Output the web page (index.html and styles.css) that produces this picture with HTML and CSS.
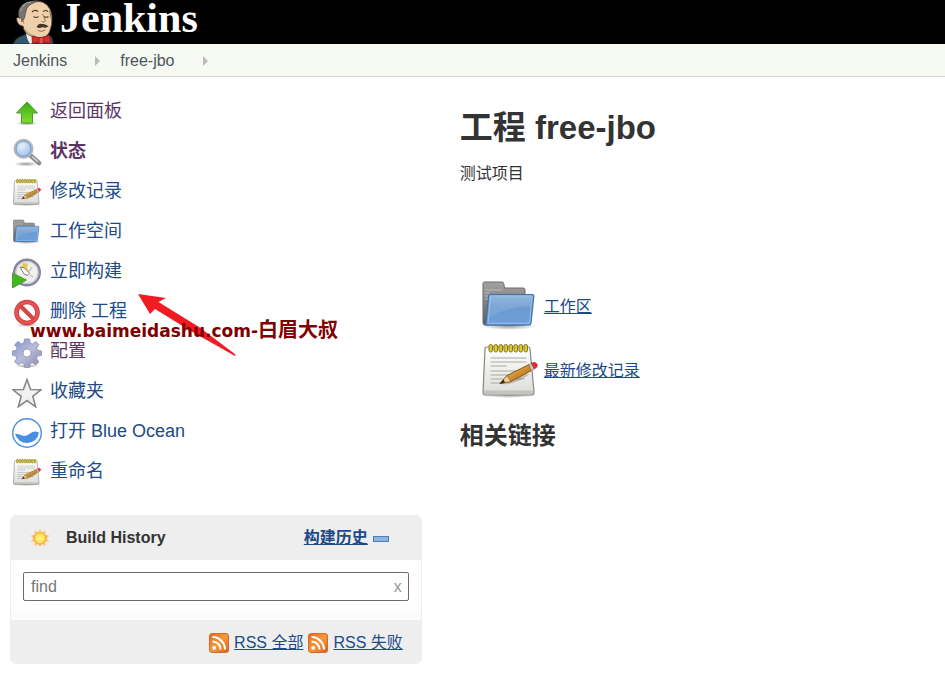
FILE: index.html
```html
<!DOCTYPE html>
<html lang="zh-CN">
<head>
<meta charset="utf-8">
<title>free-jbo [Jenkins]</title>
<link rel="stylesheet" href="styles.css">
</head>
<body>
<svg class="defs" aria-hidden="true">
  <defs>
    <linearGradient id="gGreen" x1="0" y1="0" x2="0" y2="1"><stop offset="0" stop-color="#3fa81a"/><stop offset="1" stop-color="#7ee02c"/></linearGradient>
    <linearGradient id="gPaper" x1="0" y1="0" x2="0" y2="1"><stop offset="0" stop-color="#ffffff"/><stop offset="1" stop-color="#dcdcd8"/></linearGradient>
    <linearGradient id="gFolder" x1="0" y1="0" x2="0" y2="1"><stop offset="0" stop-color="#86b0dc"/><stop offset="0.45" stop-color="#6c9bd0"/><stop offset="1" stop-color="#6ba0dc"/></linearGradient>
    <linearGradient id="gBack" x1="0" y1="0" x2="0" y2="1"><stop offset="0" stop-color="#a2a2a2"/><stop offset="1" stop-color="#5c5c5c"/></linearGradient>
    <linearGradient id="gPencil" x1="0" y1="0" x2="1" y2="1"><stop offset="0.2" stop-color="#f0b860"/><stop offset="0.8" stop-color="#b06c14"/></linearGradient>
    <linearGradient id="gGear" x1="0" y1="0" x2="1" y2="1"><stop offset="0" stop-color="#7f93c4"/><stop offset="0.5" stop-color="#b8bcda"/><stop offset="1" stop-color="#8a86a8"/></linearGradient>
    <linearGradient id="gRss" x1="0" y1="0" x2="1" y2="1"><stop offset="0" stop-color="#e06a24"/><stop offset="0.5" stop-color="#f79a3c"/><stop offset="1" stop-color="#d95f20"/></linearGradient>
    <radialGradient id="gLens" cx="0.4" cy="0.35" r="0.7"><stop offset="0" stop-color="#e4f0fc"/><stop offset="1" stop-color="#96bce8"/></radialGradient>
    <radialGradient id="gSun"><stop offset="0" stop-color="#fff6a0"/><stop offset="1" stop-color="#fcd83c"/></radialGradient>
    <radialGradient id="gShade"><stop offset="0" stop-color="#000" stop-opacity="0.4"/><stop offset="1" stop-color="#000" stop-opacity="0"/></radialGradient>
    <symbol id="folder" viewBox="0 0 56 56">
      <ellipse cx="27" cy="46" rx="28" ry="4" fill="url(#gShade)"/>
      <path d="M1 3.500Q1 2 2.500 2H20q1.500 0 1.700 1.500L22.500 8H41q2 0 2 2v35H3q-2 0-2-2Z" fill="url(#gBack)" stroke="#6a6a6a"/>
      <path d="M2.500 10h18M2.500 13h5M2.500 16h4M2.500 19h4" stroke="#c4c4c4" stroke-width="0.800"/>
      <path d="M8.500 14.500H50q2 0 1.800 2L49 43q-.3 2-2 2H4q-1 0 0-1.500L6.500 16.500q.2-2 2-2Z" fill="url(#gFolder)" stroke="#3f6fae" stroke-width="1.200"/>
      <path d="M8.500 16.200H50L47.500 43.300H6Z" fill="none" stroke="#a4c4e8" stroke-width="0.900"/>
      <path d="M8 17H49l-.8 9Q29 26 7 37Z" fill="#fff" opacity="0.100"/>
    </symbol>
    <symbol id="notepad" viewBox="0 0 56 56">
      <ellipse cx="27" cy="51" rx="27" ry="3" fill="url(#gShade)"/>
      <path d="M5 3H47Q48 3 48 5L52 48q0 3-2 3H3q-2 0-2-3L3 5Q3 3 5 3Z" fill="url(#gPaper)" stroke="#858582" stroke-width="1.200"/>
      <path d="M1.500 46.500h50v4h-50Z" fill="#b8b8b4" opacity="0.700"/>
      <path d="M8.500 14h36M8.500 18h36M8.500 22h16M8.500 27h36M8.500 31h32M8.500 35h34M8.500 39h12" stroke="#aaa" stroke-width="1.100"/>
      <g fill="#dccb38" stroke="#85751a" stroke-width="1"><rect x="7" y="0.500" width="3.500" height="7.500" rx="1.700"/><rect x="12" y="0.500" width="3.500" height="7.500" rx="1.700"/><rect x="17" y="0.500" width="3.500" height="7.500" rx="1.700"/><rect x="22" y="0.500" width="3.500" height="7.500" rx="1.700"/><rect x="27" y="0.500" width="3.500" height="7.500" rx="1.700"/><rect x="32" y="0.500" width="3.500" height="7.500" rx="1.700"/><rect x="37" y="0.500" width="3.500" height="7.500" rx="1.700"/><rect x="42" y="0.500" width="3.500" height="7.500" rx="1.700"/></g>
      <path d="M18 40q14 2 30-10l-6 0Z" fill="#000" opacity="0.180"/>
      <path d="M18 39.500L25 31.500 47 20.500 49.500 26.500 29 37.500Z" fill="url(#gPencil)" stroke="#8f5902"/>
      <path d="M18 39.500L25 31.500 29 37.500Z" fill="#e9cfa0" stroke="#8f5902" stroke-width="0.700"/>
      <path d="M17.500 40l4-4.500 1.500 2.800Z" fill="#222"/>
      <path d="M47 20.500l2.500-1.300 2.800 5.800-2.800 1.500Z" fill="#ccc" stroke="#888" stroke-width="0.600"/>
      <path d="M49.500 19.200q4-1.700 5.500 1t-2.700 4.800Z" fill="#e82c30" stroke="#b82024" stroke-width="0.700"/>
    </symbol>
    <symbol id="rss" viewBox="0 0 20 20">
      <rect x="0.500" y="0.500" width="19" height="19" rx="2.500" fill="url(#gRss)" stroke="#d96a28"/>
      <circle cx="5.200" cy="14.800" r="1.900" fill="#fff"/>
      <path d="M3.500 8.500a8 8 0 0 1 8 8M3.500 4a12.500 12.500 0 0 1 12.500 12.500" fill="none" stroke="#fff" stroke-width="2.100"/>
    </symbol>
  </defs>
</svg>

<header class="top">
  <a class="brand" href="#">
    <svg class="butler" viewBox="0 0 44 44" aria-hidden="true">
      <path d="M1.500 44Q3 38 10 36l9-4 18 3q4 2 4 9Z" fill="#33576c" stroke="#1c2f3c"/>
      <path d="M14 31l20 3 1 7-9-1-8 4Q14 38 14 31Z" fill="#f0ece6"/>
      <path d="M8 18Q3.500 16 5 21t6 5l1 4q4 7 14 7.500 9 .5 11.500-5.500 3-7 2.500-16Q38 2 25 1 9 1 8 18Z" fill="#eed0aa" stroke="#54402f" stroke-width="0.800"/>
      <path d="M7 18Q4 6 16 2q5-2 12-1Q17 3 14.500 9q-1 4-2 9l-2.500 4-1-4Z" fill="#77736f" stroke="#3c3835" stroke-width="0.600"/>
      <path d="M37 9q3 5 3 12l-1.500-3Z" fill="#77736f"/>
      <path d="M10 6q4-4 9-4M8.500 11q1-4 4-6" fill="none" stroke="#b4b0aa" stroke-width="0.900"/>
      <path d="M20 12q3-3 6-.5M31 11.500q3-2 5 0M21.500 16.500q2.500 2 5 0M32 16.500q2 1.500 4.500 0" fill="none" stroke="#4e3b2c" stroke-width="1.100"/>
      <path d="M30.500 14q2 4 3 7-1.500 2-4 .5" fill="none" stroke="#9d7557"/>
      <path d="M24.500 27q2-4 5.500-3 4-.5 6.500 2.500-3 2-6 .5-3 2-6 0Z" fill="#43352c"/>
      <path d="M26 30.500q4 2 7-.5" fill="none" stroke="#a0624c"/>
      <path d="M12 24l-1-4M13 29q3 5 8 6.500" fill="none" stroke="#b98e68"/>
      <path d="M20 37q0-1.500 2-1l6 2.500 7-2.500q3-1 3 1l.5 6.500-9-1.500-9 1.500Z" fill="#d92c2c" stroke="#7c1414" stroke-width="0.700"/>
      <path d="M27 37.500h4.500V43.500H27Z" fill="#f04848" stroke="#7c1414" stroke-width="0.600"/>
    </svg>
    <span class="brand-name">Jenkins</span>
  </a>
</header>

<nav class="crumbs" aria-label="Breadcrumb">
  <a href="#">Jenkins</a><span class="chevron"></span><a href="#">free-jbo</a><span class="chevron"></span>
</nav>

<div class="page">
  <aside class="side">
    <nav class="tasks">
      <a class="task visited" href="#"><svg viewBox="0 0 30 30"><ellipse cx="15" cy="25.500" rx="11" ry="2" fill="url(#gShade)"/><path d="M15 4L25.500 15H20.500V25H9.500V15H4.500Z" fill="url(#gGreen)" stroke="#4a9a2c"/></svg><span>返回面板</span></a>
      <a class="task visited current" href="#"><svg viewBox="0 0 30 30"><ellipse cx="14" cy="26" rx="12" ry="2.500" fill="url(#gShade)"/><path d="M18.500 17.500L27 25" stroke="#8c8c8c" stroke-width="4.500" stroke-linecap="round"/><path d="M20 18.500l6 5.200" stroke="#d8d8d8" stroke-width="1.500"/><circle cx="11.500" cy="10.800" r="9" fill="url(#gLens)" stroke="#b4b6b8" stroke-width="2"/><circle cx="11.500" cy="10.800" r="7.500" fill="none" stroke="#6c98d0"/></svg><span>状态</span></a>
      <a class="task" href="#"><svg viewBox="-2 -2 60 60"><use href="#notepad" width="56" height="56"/></svg><span>修改记录</span></a>
      <a class="task" href="#"><svg viewBox="-2 -2 60 60"><use href="#folder" width="56" height="56"/></svg><span>工作空间</span></a>
      <a class="task" href="#"><svg viewBox="0 0 30 30"><circle cx="15" cy="14.500" r="12.800" fill="#f0f0ec" stroke="#8486a2" stroke-width="2.400"/><circle cx="15" cy="14.500" r="11" fill="none" stroke="#c4c6ce"/><path d="M11 5l5 .5-1 5 2.500 3-4.500 3-4-7Z" fill="#ecc64c"/><path d="M8 9l4 7 3.500 1.500 2-2.500-5-5Z" fill="#fff" stroke="#666" stroke-width="0.800"/><path d="M20 9l-2.500 4M21 19l-3-2" stroke="#aaa"/><path d="M.5 15L14.500 22 .5 30Z" fill="#3fb818" stroke="#5a9a48"/></svg><span>立即构建</span></a>
      <a class="task" href="#"><svg viewBox="0 0 30 30"><ellipse cx="15" cy="27" rx="11" ry="2" fill="url(#gShade)"/><circle cx="15" cy="14.500" r="10.500" fill="#fff" stroke="#c43434" stroke-width="4.600"/><circle cx="15" cy="14.500" r="10.500" fill="none" stroke="#e65252" stroke-width="3.200"/><path d="M8 7.500l14 14" stroke="#d84444" stroke-width="4"/></svg><span>删除 工程</span></a>
      <a class="task visited" href="#"><svg viewBox="0 0 30 30"><ellipse cx="15" cy="28" rx="12" ry="2" fill="url(#gShade)"/><path fill-rule="evenodd" d="M12.500 1h5l.8 4 2.200.9L24 3.400 27 6.700 24.600 10l1 2.300 3.900.7v4.300l-4 .8-1 2.300 2.400 3.400-3.200 3.200-3.400-2.300-2.100.9-.8 3.900h-4.600l-.9-3.900-2.200-.9-3.400 2.300L2.500 23.700l2.300-3.400-.9-2.200-3.400-.8V13l3.600-.7 1-2.300L2.600 6.700 6 3.400l3.500 2.500 2.200-.9ZM15 11a4 4 0 1 0 .1 0Z" fill="url(#gGear)" stroke="#8286ac" stroke-width="0.700"/></svg><span>配置</span></a>
      <a class="task" href="#"><svg viewBox="0 0 30 30"><path d="M15 1.500L18.600 11.500 29 11.800 20.800 18.300 23.700 28.800 15 22.600 6.300 28.800 9.200 18.300 1 11.800 11.400 11.500Z" fill="#f1f1f1" stroke="#888885" stroke-width="1.600"/></svg><span>收藏夹</span></a>
      <a class="task" href="#"><svg viewBox="0 0 30 30"><circle cx="15" cy="15" r="14.300" fill="#fff" stroke="#4a90e2" stroke-width="1.400"/><path d="M3 15.500Q7 16 10 17.500 14 19 18 15.500 22 12 27 14.500A12.200 12.200 0 0 1 3 15.500Z" fill="#4a90e2"/></svg><span>打开 Blue Ocean</span></a>
      <a class="task" href="#"><svg viewBox="-2 -2 60 60"><use href="#notepad" width="56" height="56"/></svg><span>重命名</span></a>
    </nav>

    <section class="history">
      <div class="history-head">
        <svg class="sun" viewBox="0 0 20 20" aria-hidden="true"><path d="M10 .8l1.800 3.700 3.700-1.900-.4 4.100 4.100.9-2.700 2.800 2.700 2.800-4.100.8.400 3.900-3.700-1.800L10 19.200l-1.800-3.100-3.700 1.800.4-3.900-4.100-.8 2.700-2.800L.8 7.600l4.100-.9-.4-4.100 3.700 1.900Z" fill="#f9c070"/><circle cx="10" cy="10.300" r="5.800" fill="url(#gSun)" stroke="#f5a83c"/></svg>
        <strong>Build History</strong>
        <a class="trend" href="#">构建历史</a>
        <a class="collapse" href="#" aria-label="collapse"></a>
      </div>
      <div class="history-find">
        <div class="find-box">
          <input type="text" placeholder="find" aria-label="find">
          <button type="button">x</button>
        </div>
      </div>
      <div class="history-feeds">
        <a href="#"><svg viewBox="0 0 20 20"><use href="#rss"/></svg><span>RSS 全部</span></a>
        <a href="#"><svg viewBox="0 0 20 20"><use href="#rss"/></svg><span>RSS 失败</span></a>
      </div>
    </section>

    <svg class="arrow" viewBox="0 0 100 64" aria-hidden="true"><path d="M1 1L29 5 21.500 9 62 34 98.500 61.500 98 63 52 37 18 16 13 21Z" fill="#f01c24"/></svg>
    <div class="watermark">www.baimeidashu.com-<span>白眉大叔</span></div>
  </aside>

  <main class="main">
    <h1>工程 free-jbo</h1>
    <p class="about">测试项目</p>
    <ul class="shortcuts">
      <li><svg viewBox="0 0 56 56"><use href="#folder"/></svg><a href="#">工作区</a></li>
      <li><svg viewBox="0 0 56 56"><use href="#notepad"/></svg><a href="#">最新修改记录</a></li>
    </ul>
    <h2>相关链接</h2>
  </main>
</div>
</body>
</html>
```

FILE: styles.css
```css
* { box-sizing: border-box; }

body {
  margin: 0;
  background: #fff;
  color: #333;
  font: 16px/20px "Liberation Sans", "Noto Sans CJK SC", sans-serif;
}

a { color: #204a87; }
.defs { position: absolute; width: 0; height: 0; }

.top { background: #000; padding-left: 12px; }
.brand {
  display: flex;
  height: 44px;
  color: #fff;
  text-decoration: none;
}
.butler { width: 44px; height: 44px; margin-right: 4px; }
.brand-name { font: bold 42px/36px "Liberation Serif", serif; }

.crumbs {
  display: flex;
  align-items: center;
  height: 33px;
  padding: 2px 0 0 13px;
  background: #f6faf2;
  border-bottom: 1px solid #d3d7cf;
}
.crumbs a { color: #4d545d; text-decoration: none; }
.chevron {
  margin: 0 20px 0 28px;
  border: 5px solid transparent;
  border-left: 5px solid #bbb;
  border-right: 0;
}

.page {
  display: grid;
  grid-template-columns: 13fr 15fr;
  column-gap: 38px;
  padding: 16px 10px 12px;
}

.side { position: relative; }
.task {
  display: flex;
  align-items: center;
  gap: 8px;
  height: 40px;
  padding-left: 2px;
  font-size: 18px;
  text-decoration: none;
}
.task svg { flex: none; width: 30px; height: 30px; }
.task span { padding-bottom: 4px; }
.visited { color: #5c3566; }
.current { font-weight: bold; }

.history {
  margin-top: 22px;
  border: 1px solid #eee;
  border-radius: 6px;
  overflow: hidden;
}
.history-head {
  display: flex;
  align-items: center;
  height: 44px;
  padding: 0 32px 0 19px;
  background: #eee;
}
.sun { width: 20px; height: 20px; margin-right: 16px; }
.trend { margin-left: auto; font-weight: bold; }
.collapse {
  width: 16px;
  height: 6px;
  margin: 2px 0 0 5px;
  background: #8fb3de;
  border: 1px solid #4f7fb8;
}
.history-find { padding: 12px 12px 10px; border-bottom: 9px solid #fbfbfb; }
.find-box { position: relative; }
.find-box input {
  display: block;
  width: 100%;
  height: 29px;
  padding: 0 28px 0 7px;
  border: 1px solid #6c6c6c;
  border-radius: 2px;
  font: inherit;
}
.find-box input::placeholder { color: #757575; }
.find-box button {
  position: absolute;
  right: 7px;
  top: 5px;
  padding: 0;
  border: 0;
  background: none;
  color: #999;
  font: inherit;
}
.history-feeds {
  display: flex;
  justify-content: flex-end;
  gap: 5px;
  padding: 13px 18px 10px;
  background: #eee;
}
.history-feeds a { display: flex; gap: 5px; text-decoration: none; }
.history-feeds svg { width: 20px; height: 20px; }
.history-feeds span { text-decoration: underline; }

.watermark {
  position: absolute;
  left: 20px;
  top: 226px;
  color: #800000;
  font: bold 17px/20px "DejaVu Sans", sans-serif;
  white-space: nowrap;
}
.watermark span { font: bold 20px/20px "Noto Sans CJK SC", sans-serif; }
.arrow { position: absolute; left: 127px; top: 200px; width: 100px; height: 64px; }

.main { padding-top: 16px; }
h1 { margin: 0; font-size: 33px; line-height: 38px; }
.about { margin: 17px 0 0; }
.shortcuts {
  margin: 91px 0 0;
  padding: 0 0 0 22px;
  list-style: none;
}
.shortcuts li { display: flex; align-items: center; gap: 6px; height: 64px; }
.shortcuts svg { flex: none; width: 56px; height: 56px; margin-top: 2px; }
h2 { margin: 19px 0 0; font-size: 24px; line-height: 28px; }
```
